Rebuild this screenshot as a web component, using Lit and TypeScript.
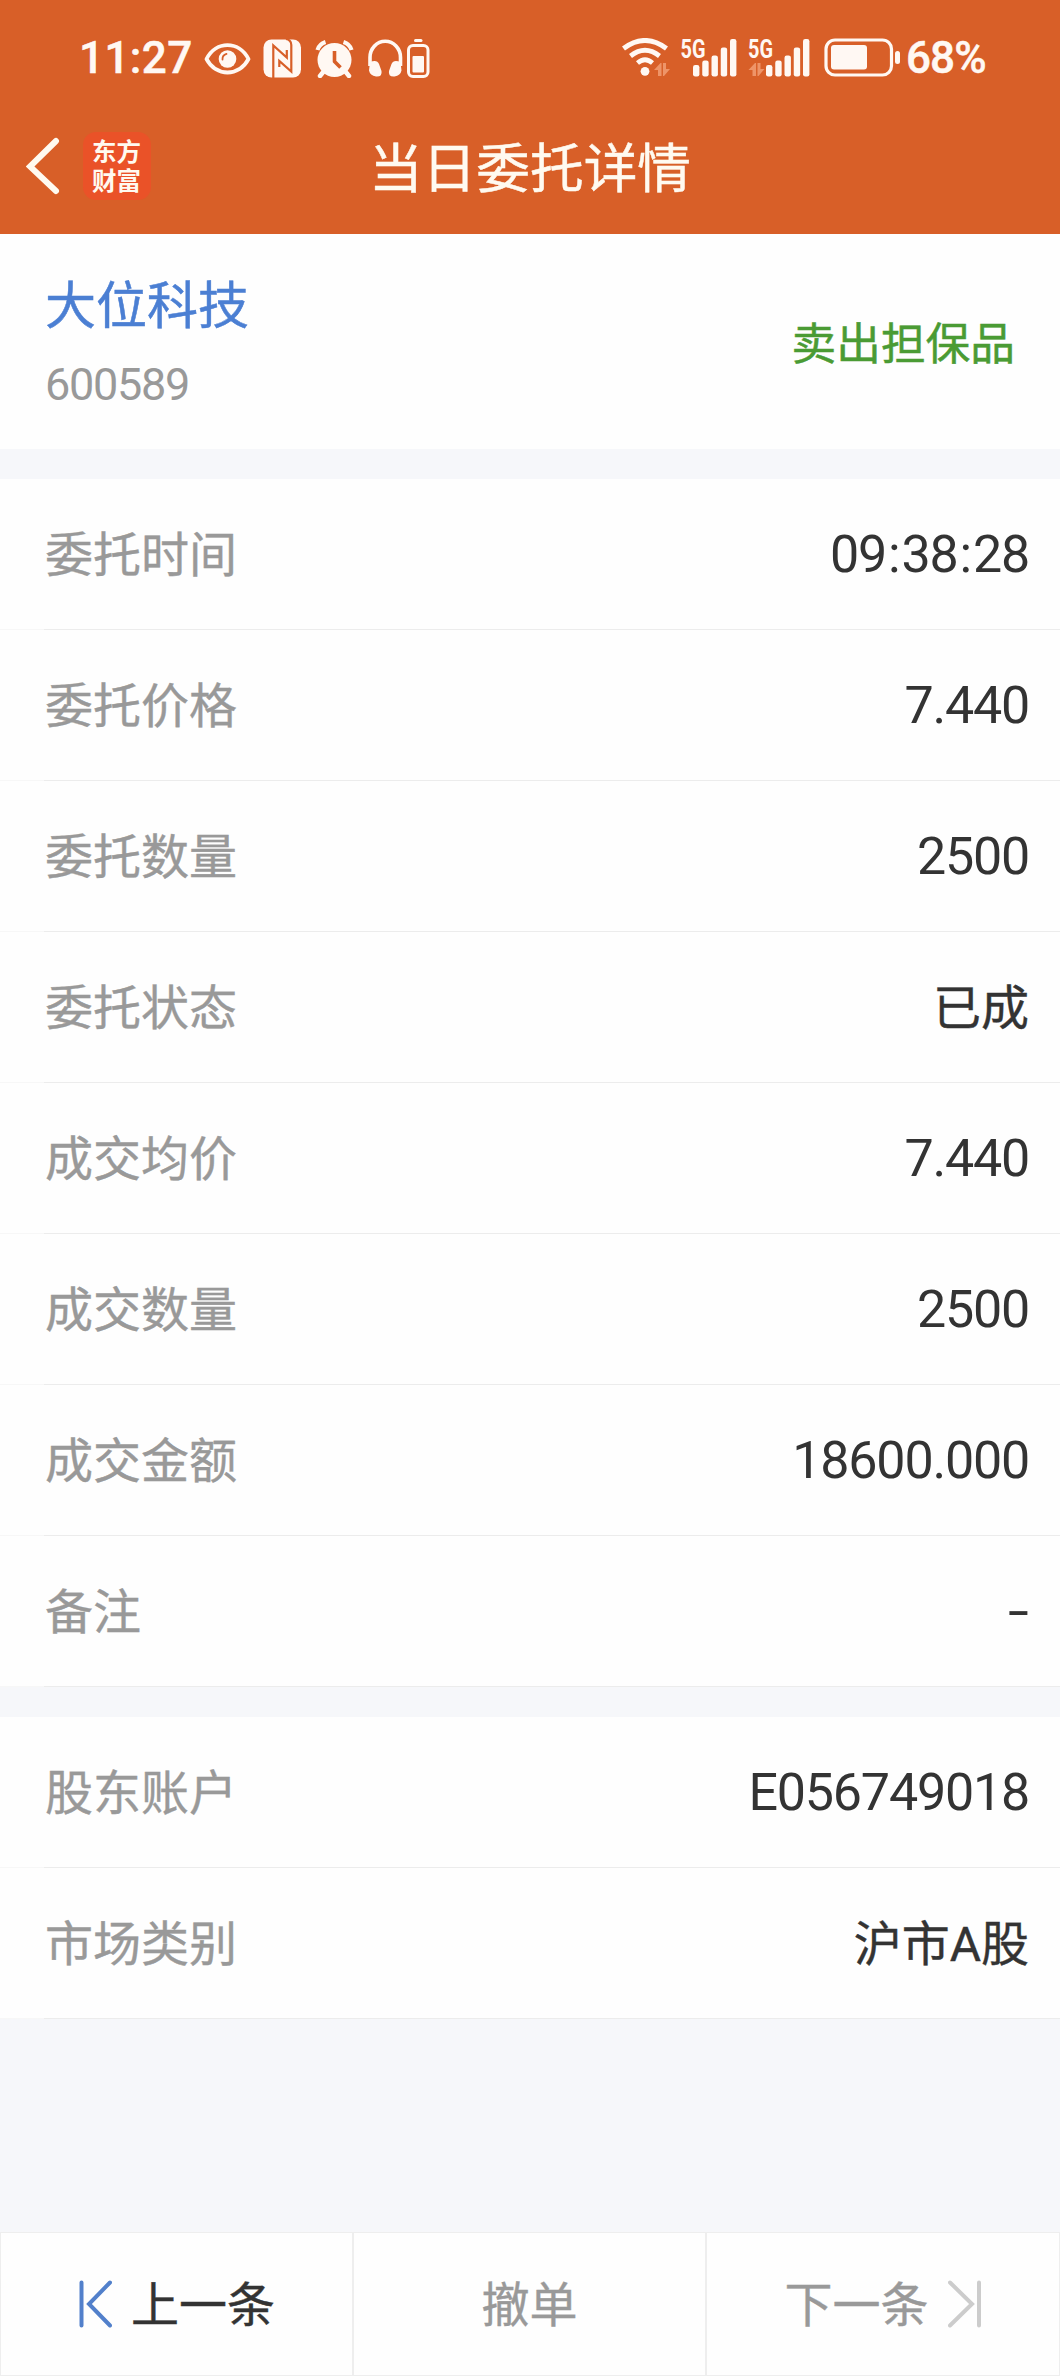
import { LitElement, html, svg, css } from "lit";
import { customElement, property } from "lit/decorators.js";

interface Field {
  label: string;
  value: string;
}

const ORDER_FIELDS: Field[] = [
  { label: "委托时间", value: "09:38:28" },
  { label: "委托价格", value: "7.440" },
  { label: "委托数量", value: "2500" },
  { label: "委托状态", value: "已成" },
  { label: "成交均价", value: "7.440" },
  { label: "成交数量", value: "2500" },
  { label: "成交金额", value: "18600.000" },
  { label: "备注", value: "-" },
];

const ACCOUNT_FIELDS: Field[] = [
  { label: "股东账户", value: "E056749018" },
  { label: "市场类别", value: "沪市A股" },
];

@customElement("status-bar")
class StatusBar extends LitElement {
  static styles = css`
    :host {
      display: flex;
      align-items: center;
      height: 116px;
      box-sizing: border-box;
      padding: 0 71px 0 79px;
      justify-content: space-between;
      color: #fff8f3;
      font-family: Roboto, "Noto Sans CJK SC", sans-serif;
    }
    .group {
      display: flex;
      align-items: center;
    }
    .clock {
      font-size: 44px;
      line-height: 52px;
      font-weight: 500;
      letter-spacing: 0.4px;
      width: 124px;
      white-space: nowrap;
      -webkit-text-stroke: 0.5px currentColor;
    }
    .percent {
      font-size: 44px;
      line-height: 52px;
      font-weight: 500;
      letter-spacing: -0.9px;
      margin-left: 5px;
      width: 83px;
      white-space: nowrap;
      -webkit-text-stroke: 0.5px currentColor;
    }
    svg {
      display: block;
      flex: none;
    }
    .signal-text {
      font-family: Roboto, sans-serif;
      font-size: 26px;
      font-weight: 700;
    }
  `;

  private arrows(x: number) {
    return svg`<path fill="#ee9468" d="M${x} 32 l6.5 -7 h1 v13 h-3.5 v-6 z M${x + 9} 25 h3 v6 h4 l-6 7 h-1 z" />`;
  }

  private bars(x: number) {
    const tops = [27, 22.5, 17.5, 9.5, 1];
    return tops.map(
      (t, i) => svg`<rect x=${x + i * 9.25} y=${t} width="6.4" height=${38.5 - t} rx="2.2" fill="currentColor" />`
    );
  }

  render() {
    return html`
      <div class="group">
        <div class="clock">11:27</div>
        <svg width="230" height="40" viewBox="203 38 230 40" fill="none" stroke="currentColor">
          <path d="M206.5 59 C216 40.5 239 40.5 248.5 59 C239 77 216 77 206.5 59 Z" stroke-width="3.8" stroke-linejoin="round" />
          <circle cx="227.5" cy="59" r="8.8" fill="currentColor" stroke="none" />
          <path d="M222.5 59.5 a5.5 5.5 0 0 1 4 -5.6" stroke="#d85f28" stroke-width="1.8" stroke-linecap="round" />

          <rect x="263.5" y="39.5" width="37.5" height="38" rx="8" fill="currentColor" stroke="none" />
          <path d="M273.3 78 V45.5 L286.8 57.5 V50" stroke="#d85f28" stroke-width="2.2" />
          <path d="M286 39 Q291.3 40 291.3 45 V71.5 L279.3 61 V67" stroke="#d85f28" stroke-width="2.2" />

          <circle cx="334.5" cy="60" r="17" fill="currentColor" stroke="none" />
          <path d="M317.5 50 a12 12 0 0 1 8 -8 M343.5 42 a12 12 0 0 1 8 8" stroke-width="4.2" />
          <path d="M324 71 l-4 5 M345 71 l4 5" stroke-width="4.5" stroke-linecap="round" />
          <path d="M334.5 51 V61.5 L340.5 67.5" stroke="#d85f28" stroke-width="3.6" stroke-linejoin="round" />

          <path d="M370 66 V57.5 a15 16 0 0 1 30.5 0 V66" stroke-width="3.6" />
          <path d="M370 62 q7 -3 9 2 l2.5 7 q1 6 -5.5 5.5 q-6 -1 -7 -6 z M400.5 62 q-7 -3 -9 2 l-2.5 7 q-1 6 5.5 5.5 q6 -1 7 -6 z" fill="currentColor" stroke="none" />

          <rect x="408.5" y="45.5" width="19.5" height="31" rx="4.5" stroke-width="3" />
          <rect x="414" y="39" width="8.5" height="3" rx="1.5" fill="currentColor" stroke="none" />
          <rect x="412.5" y="56" width="11.5" height="16.5" rx="1" fill="currentColor" stroke="none" />
        </svg>
      </div>
      <div class="group">
        <svg width="280" height="40" viewBox="622 0 280 40" fill="none" stroke="currentColor">
          <path d="M624.5 10.5 Q646 -5.5 667.5 10.5" stroke-width="5" />
          <path d="M631.5 18 Q646 6.5 660.5 18" stroke-width="4.8" />
          <path d="M638.5 25 Q646 18.5 653.5 25" stroke-width="4.6" />
          <circle cx="646" cy="33.3" r="4.4" fill="currentColor" stroke="none" />
          <g stroke="none">
            ${this.arrows(655)} ${this.bars(694)}
            <text class="signal-text" x="681.5" y="19.8" textLength="25" lengthAdjust="spacingAndGlyphs" fill="currentColor">5G</text>
            ${this.arrows(749.5)} ${this.bars(767)}
            <text class="signal-text" x="749" y="19.8" textLength="25" lengthAdjust="spacingAndGlyphs" fill="currentColor">5G</text>
          </g>
          <rect x="827" y="2" width="65.5" height="35" rx="9" stroke-width="3.2" />
          <rect x="832" y="7" width="36" height="24.5" rx="3" fill="currentColor" stroke="none" />
          <rect x="896" y="13" width="5" height="13" rx="2.5" fill="currentColor" stroke="none" />
        </svg>
        <div class="percent">68%</div>
      </div>
    `;
  }
}

@customElement("nav-header")
class NavHeader extends LitElement {
  static styles = css`
    :host {
      display: grid;
      grid-template-columns: 300px 1fr 300px;
      align-items: center;
      height: 118px;
      color: #fffaf0;
    }
    .left {
      display: flex;
      align-items: center;
      padding-left: 26px;
      margin-top: -18px;
      gap: 23px;
    }
    .logo {
      width: 68px;
      height: 68px;
      border-radius: 13px;
      background: #ea5228;
      box-sizing: border-box;
      padding: 4px 0 0 9px;
      font-size: 24.5px;
      line-height: 29px;
      font-weight: 700;
    }
    .title {
      font-size: 53.7px;
      line-height: 64px;
      text-align: center;
      white-space: nowrap;
      margin-top: -20px;
      -webkit-text-stroke: 0.5px currentColor;
    }
    svg {
      display: block;
    }
  `;

  render() {
    return html`
      <div class="left">
        <svg width="34" height="58" viewBox="0 0 34 58" fill="none" stroke="currentColor">
          <path d="M30 4 L4 29.5 L30 54" stroke-width="6" stroke-linecap="round" />
        </svg>
        <div class="logo">东方<br />财富</div>
      </div>
      <div class="title">当日委托详情</div>
    `;
  }
}

@customElement("field-list")
class FieldList extends LitElement {
  @property({ attribute: false }) fields: Field[] = [];

  static styles = css`
    :host {
      display: block;
      background: #fefefe;
    }
    .row {
      display: flex;
      align-items: center;
      justify-content: space-between;
      height: 151px;
      box-sizing: border-box;
      padding: 0 31px 0 45px;
      border-bottom: 1px solid #ececec;
      border-image: linear-gradient(to right, #f7f7f7 45px, #ececec 45px) 1;
    }
    .label {
      font-size: 48px;
      color: #999;
      padding-bottom: 6px;
      -webkit-text-stroke: 0.4px currentColor;
    }
    .value {
      font-family: Roboto, "Noto Sans CJK SC", sans-serif;
      font-size: 52px;
      letter-spacing: -1.2px;
      color: #333;
    }
    .value.cjk {
      font-size: 48px;
      letter-spacing: 0;
      padding-bottom: 6px;
      -webkit-text-stroke: 0.4px currentColor;
    }
    .colon {
      margin: 0 2px;
    }
    .dash {
      display: inline-block;
      transform: scaleX(1.45);
      transform-origin: right center;
      margin-right: 2px;
    }
  `;

  private renderValue(value: string) {
    if (value === "-") return html`<span class="dash">-</span>`;
    return value
      .split(":")
      .map((part, i) => (i ? html`<span class="colon">:</span>${part}` : html`${part}`));
  }

  render() {
    return this.fields.map(
      (f) => html`<div class="row">
        <span class="label">${f.label}</span>
        <span class="value ${/[\u4e00-\u9fff]/.test(f.value) ? "cjk" : ""}">${this.renderValue(f.value)}</span>
      </div>`
    );
  }
}

@customElement("app-root")
class AppRoot extends LitElement {
  static styles = css`
    :host {
      display: flex;
      flex-direction: column;
      width: 1060px;
      height: 2376px;
      background: #f6f7fa;
      font-family: "Noto Sans CJK SC", sans-serif;
    }
    .top {
      background: #d85f28;
      height: 234px;
    }
    .stock {
      display: flex;
      align-items: center;
      justify-content: space-between;
      height: 215px;
      box-sizing: border-box;
      padding: 0 45px;
      background: #fefefe;
      margin-bottom: 30px;
    }
    .name {
      font-size: 51px;
      line-height: 70px;
      color: #4b7fd3;
      margin-top: -2px;
      -webkit-text-stroke: 0.5px currentColor;
    }
    .code {
      font-family: Roboto, sans-serif;
      font-size: 45px;
      line-height: 60px;
      letter-spacing: -1.3px;
      color: #999;
      margin-top: 18px;
    }
    .side {
      font-size: 44.7px;
      color: #4a9b34;
      padding-bottom: 3px;
      -webkit-text-stroke: 0.5px currentColor;
    }
    .account {
      margin-top: 30px;
    }
    .actions {
      display: grid;
      grid-template-columns: 353px 353px 354px;
      height: 144px;
      margin-top: auto;
    }
    .action {
      display: flex;
      align-items: center;
      justify-content: center;
      box-sizing: border-box;
      border: 1px solid #eee;
      background: #fefefe;
      font-size: 48px;
      color: #999;
    }
    .action span {
      padding-bottom: 6px;
      -webkit-text-stroke: 0.4px currentColor;
    }
    .action.active {
      color: #333;
    }
    .prev {
      gap: 19px;
    }
    .next {
      gap: 19px;
    }
    svg {
      display: block;
    }
  `;

  render() {
    return html`
      <div class="top">
        <status-bar></status-bar>
        <nav-header></nav-header>
      </div>
      <div class="stock">
        <div>
          <div class="name">大位科技</div>
          <div class="code">600589</div>
        </div>
        <div class="side">卖出担保品</div>
      </div>
      <field-list .fields=${ORDER_FIELDS}></field-list>
      <field-list class="account" .fields=${ACCOUNT_FIELDS}></field-list>
      <div class="actions">
        <div class="action active prev">
          <svg width="34" height="48" viewBox="0 0 34 48" fill="none" stroke="#5280cb" stroke-width="4" stroke-linecap="round">
            <path d="M3.5 2.5 V45.5 M32 2.5 L11 24 L32 45.5" />
          </svg>
          <span>上一条</span>
        </div>
        <div class="action"><span>撤单</span></div>
        <div class="action next">
          <span>下一条</span>
          <svg width="34" height="48" viewBox="0 0 34 48" fill="none" stroke="#ccc" stroke-width="4" stroke-linecap="round">
            <path d="M31 2.5 V45.5 M2 2.5 L24 24 L2 45.5" />
          </svg>
        </div>
      </div>
    `;
  }
}
